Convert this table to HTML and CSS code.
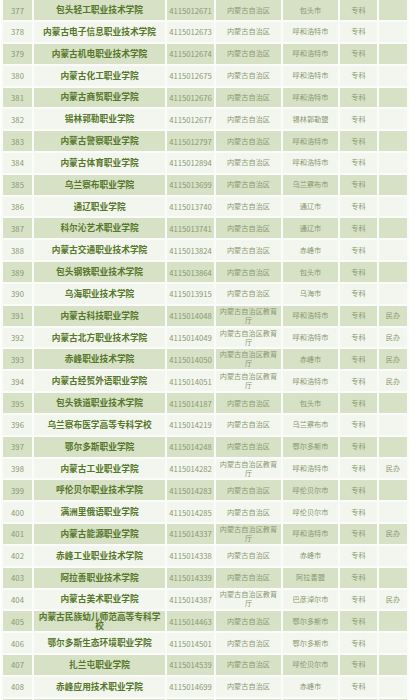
FILE: index.html
```html
<!DOCTYPE html>
<html lang="zh-CN">
<head>
<meta charset="utf-8">
<title>院校名单</title>
<link rel="stylesheet" href="styles.css">
</head>
<body>
<table class="list">
<colgroup>
<col class="c-no"><col class="c-name"><col class="c-code"><col class="c-dept"><col class="c-city"><col class="c-level"><col class="c-note">
</colgroup>
<tbody>
<tr><td>377</td><td class="name">包头轻工职业技术学院</td><td>4115012671</td><td class="sm">内蒙古自治区</td><td class="sm">包头市</td><td class="sm">专科</td><td class="sm"></td></tr>
<tr><td>378</td><td class="name">内蒙古电子信息职业技术学院</td><td>4115012673</td><td class="sm">内蒙古自治区</td><td class="sm">呼和浩特市</td><td class="sm">专科</td><td class="sm"></td></tr>
<tr><td>379</td><td class="name">内蒙古机电职业技术学院</td><td>4115012674</td><td class="sm">内蒙古自治区</td><td class="sm">呼和浩特市</td><td class="sm">专科</td><td class="sm"></td></tr>
<tr><td>380</td><td class="name">内蒙古化工职业学院</td><td>4115012675</td><td class="sm">内蒙古自治区</td><td class="sm">呼和浩特市</td><td class="sm">专科</td><td class="sm"></td></tr>
<tr><td>381</td><td class="name">内蒙古商贸职业学院</td><td>4115012676</td><td class="sm">内蒙古自治区</td><td class="sm">呼和浩特市</td><td class="sm">专科</td><td class="sm"></td></tr>
<tr><td>382</td><td class="name">锡林郭勒职业学院</td><td>4115012677</td><td class="sm">内蒙古自治区</td><td class="sm">锡林郭勒盟</td><td class="sm">专科</td><td class="sm"></td></tr>
<tr><td>383</td><td class="name">内蒙古警察职业学院</td><td>4115012797</td><td class="sm">内蒙古自治区</td><td class="sm">呼和浩特市</td><td class="sm">专科</td><td class="sm"></td></tr>
<tr><td>384</td><td class="name">内蒙古体育职业学院</td><td>4115012894</td><td class="sm">内蒙古自治区</td><td class="sm">呼和浩特市</td><td class="sm">专科</td><td class="sm"></td></tr>
<tr><td>385</td><td class="name">乌兰察布职业学院</td><td>4115013699</td><td class="sm">内蒙古自治区</td><td class="sm">乌兰察布市</td><td class="sm">专科</td><td class="sm"></td></tr>
<tr><td>386</td><td class="name">通辽职业学院</td><td>4115013740</td><td class="sm">内蒙古自治区</td><td class="sm">通辽市</td><td class="sm">专科</td><td class="sm"></td></tr>
<tr><td>387</td><td class="name">科尔沁艺术职业学院</td><td>4115013741</td><td class="sm">内蒙古自治区</td><td class="sm">通辽市</td><td class="sm">专科</td><td class="sm"></td></tr>
<tr><td>388</td><td class="name">内蒙古交通职业技术学院</td><td>4115013824</td><td class="sm">内蒙古自治区</td><td class="sm">赤峰市</td><td class="sm">专科</td><td class="sm"></td></tr>
<tr><td>389</td><td class="name">包头钢铁职业技术学院</td><td>4115013864</td><td class="sm">内蒙古自治区</td><td class="sm">包头市</td><td class="sm">专科</td><td class="sm"></td></tr>
<tr><td>390</td><td class="name">乌海职业技术学院</td><td>4115013915</td><td class="sm">内蒙古自治区</td><td class="sm">乌海市</td><td class="sm">专科</td><td class="sm"></td></tr>
<tr><td>391</td><td class="name">内蒙古科技职业学院</td><td>4115014048</td><td class="sm two">内蒙古自治区教育厅</td><td class="sm">呼和浩特市</td><td class="sm">专科</td><td class="sm">民办</td></tr>
<tr><td>392</td><td class="name">内蒙古北方职业技术学院</td><td>4115014049</td><td class="sm two">内蒙古自治区教育厅</td><td class="sm">呼和浩特市</td><td class="sm">专科</td><td class="sm">民办</td></tr>
<tr><td>393</td><td class="name">赤峰职业技术学院</td><td>4115014050</td><td class="sm two">内蒙古自治区教育厅</td><td class="sm">赤峰市</td><td class="sm">专科</td><td class="sm">民办</td></tr>
<tr><td>394</td><td class="name">内蒙古经贸外语职业学院</td><td>4115014051</td><td class="sm two">内蒙古自治区教育厅</td><td class="sm">呼和浩特市</td><td class="sm">专科</td><td class="sm">民办</td></tr>
<tr><td>395</td><td class="name">包头铁道职业技术学院</td><td>4115014187</td><td class="sm">内蒙古自治区</td><td class="sm">包头市</td><td class="sm">专科</td><td class="sm"></td></tr>
<tr><td>396</td><td class="name">乌兰察布医学高等专科学校</td><td>4115014219</td><td class="sm">内蒙古自治区</td><td class="sm">乌兰察布市</td><td class="sm">专科</td><td class="sm"></td></tr>
<tr><td>397</td><td class="name">鄂尔多斯职业学院</td><td>4115014248</td><td class="sm">内蒙古自治区</td><td class="sm">鄂尔多斯市</td><td class="sm">专科</td><td class="sm"></td></tr>
<tr><td>398</td><td class="name">内蒙古工业职业学院</td><td>4115014282</td><td class="sm two">内蒙古自治区教育厅</td><td class="sm">呼和浩特市</td><td class="sm">专科</td><td class="sm">民办</td></tr>
<tr><td>399</td><td class="name">呼伦贝尔职业技术学院</td><td>4115014283</td><td class="sm">内蒙古自治区</td><td class="sm">呼伦贝尔市</td><td class="sm">专科</td><td class="sm"></td></tr>
<tr><td>400</td><td class="name">满洲里俄语职业学院</td><td>4115014285</td><td class="sm">内蒙古自治区</td><td class="sm">呼伦贝尔市</td><td class="sm">专科</td><td class="sm"></td></tr>
<tr><td>401</td><td class="name">内蒙古能源职业学院</td><td>4115014337</td><td class="sm two">内蒙古自治区教育厅</td><td class="sm">呼和浩特市</td><td class="sm">专科</td><td class="sm">民办</td></tr>
<tr><td>402</td><td class="name">赤峰工业职业技术学院</td><td>4115014338</td><td class="sm">内蒙古自治区</td><td class="sm">赤峰市</td><td class="sm">专科</td><td class="sm"></td></tr>
<tr><td>403</td><td class="name">阿拉善职业技术学院</td><td>4115014339</td><td class="sm">内蒙古自治区</td><td class="sm">阿拉善盟</td><td class="sm">专科</td><td class="sm"></td></tr>
<tr><td>404</td><td class="name">内蒙古美术职业学院</td><td>4115014387</td><td class="sm two">内蒙古自治区教育厅</td><td class="sm">巴彦淖尔市</td><td class="sm">专科</td><td class="sm">民办</td></tr>
<tr><td>405</td><td class="name two">内蒙古民族幼儿师范高等专科学校</td><td>4115014463</td><td class="sm">内蒙古自治区</td><td class="sm">鄂尔多斯市</td><td class="sm">专科</td><td class="sm"></td></tr>
<tr><td>406</td><td class="name">鄂尔多斯生态环境职业学院</td><td>4115014501</td><td class="sm">内蒙古自治区</td><td class="sm">鄂尔多斯市</td><td class="sm">专科</td><td class="sm"></td></tr>
<tr><td>407</td><td class="name">扎兰屯职业学院</td><td>4115014539</td><td class="sm">内蒙古自治区</td><td class="sm">呼伦贝尔市</td><td class="sm">专科</td><td class="sm"></td></tr>
<tr><td>408</td><td class="name">赤峰应用技术职业学院</td><td>4115014699</td><td class="sm">内蒙古自治区</td><td class="sm">赤峰市</td><td class="sm">专科</td><td class="sm"></td></tr>
<tr class="tail"><td></td><td></td><td></td><td></td><td></td><td></td><td></td></tr>
</tbody>
</table>
</body>
</html>
```

FILE: styles.css
```css
html, body {
  margin: 0;
  padding: 0;
  background: #ffffff;
  overflow: hidden;
}

body {
  font-family: "Noto Sans CJK SC", "Noto Sans", sans-serif;
  color: #86956a;
}

.list {
  table-layout: fixed;
  border-collapse: separate;
  border-spacing: 2px;
  width: 408px;
  margin: -1.8px 0 0 1px;
  background: #fbfcf9;
}

.c-no { width: 29px; }
.c-name { width: 131px; }
.c-code { width: 47px; }
.c-dept { width: 65px; }
.c-city { width: 55px; }
.c-level { width: 37px; }
.c-note { width: 28px; }

.list td {
  height: 19.84px;
  padding: 0 1px;
  text-align: center;
  vertical-align: middle;
  font-size: 7.7px;
  line-height: 9px;
  white-space: nowrap;
  color: #8a9870;
}

.list tr:nth-child(odd) td {
  background: #d7e1c6;
}

.list tr:nth-child(even) td {
  background: #f3f6ee;
}

.list td.name {
  font-size: 8.7px;
  font-weight: 700;
  color: #567629;
  padding: 0 3px;
  line-height: 10px;
}

.list td.name.two {
  line-height: 9.4px;
}

.list td.sm {
  font-size: 7.2px;
}

.list td.two {
  white-space: normal;
}
```
